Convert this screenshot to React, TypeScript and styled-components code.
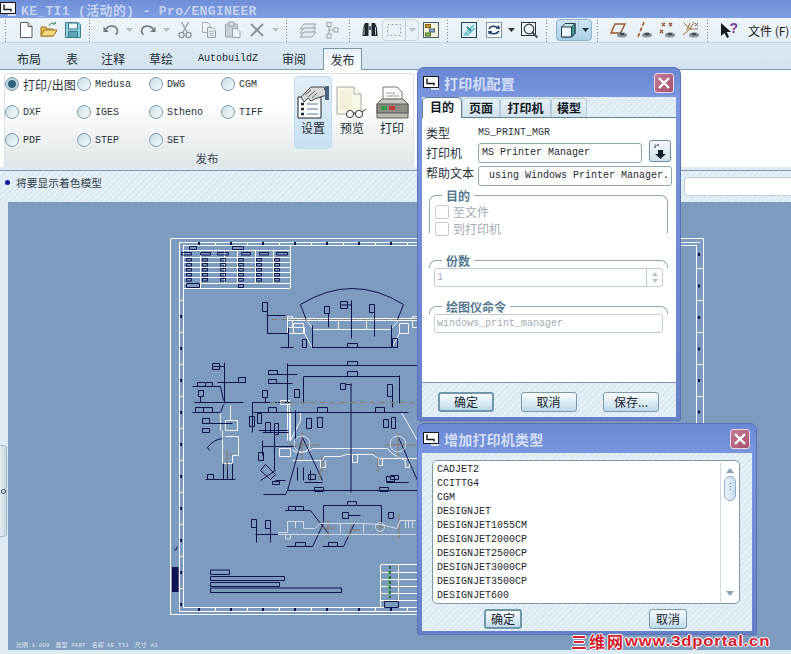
import React from "react";
import styled, { createGlobalStyle } from "styled-components";

const mono = `"Liberation Mono", "Noto Sans CJK SC", monospace`;
const cjk = `"Noto Sans CJK SC", "Liberation Sans", sans-serif`;
const hatch = `repeating-linear-gradient(135deg, #dce9f3 0 2px, #e6f0f7 2px 4px)`;

const GlobalStyle = createGlobalStyle`
  html, body { margin: 0; padding: 0; background: #dfeaf3; }
  body { font-family: ${cjk}; color: #1c2630; }
  fieldset { margin: 0; min-width: 0; }
`;

/* ---------- toolbar icons ---------- */

const Svg = ({ w = 18, h = 18, children }: { w?: number; h?: number; children: React.ReactNode }) => (
  <svg width={w} height={h} viewBox={`0 0 ${w} ${h}`} fill="none">
    {children}
  </svg>
);

const NewIcon = () => (
  <Svg>
    <path d="M3.5 1.5H11L15 5.5V16.5H3.5Z" fill="#fff" stroke="#5b5b5b" />
    <path d="M11 1.5V5.5H15" fill="#e4e4e4" stroke="#5b5b5b" />
  </Svg>
);
const OpenIcon = () => (
  <Svg>
    <path d="M1 6H6L7.5 8H13V15H1Z" fill="#e8b84c" stroke="#9a7420" />
    <path d="M1 15L4 9H17L13.5 15Z" fill="#f7d97c" stroke="#9a7420" />
    <path d="M9 5C10 2 13 1.5 15 3M15 3L15.5 0.8M15 3L12.8 3" stroke="#3f7d4a" />
  </Svg>
);
const SaveIcon = () => (
  <Svg>
    <path d="M1.5 1.5H14L16.5 4V16.5H1.5Z" fill="#8fd1dc" stroke="#3d7e8c" />
    <rect x="4.5" y="2" width="9" height="6" fill="#eef8fa" stroke="#3d7e8c" />
    <rect x="4.5" y="10.5" width="9" height="6" fill="#5aa6b8" stroke="#3d7e8c" />
  </Svg>
);
const UndoIcon = () => (
  <Svg>
    <path d="M4 8C7 4 13 4 15 8C16 10.5 15 12.5 13.5 13.5" stroke="#707a84" strokeWidth="1.6" />
    <path d="M1.5 5.5L7 11L1.5 11Z" fill="#707a84" />
  </Svg>
);
const RedoIcon = () => (
  <Svg>
    <path d="M14 8C11 4 5 4 3 8C2 10.5 3 12.5 4.5 13.5" stroke="#707a84" strokeWidth="1.6" />
    <path d="M16.5 5.5L11 11L16.5 11Z" fill="#707a84" />
  </Svg>
);
const CutIcon = () => (
  <Svg>
    <path d="M5.5 1L11 11M12.5 1L7 11" stroke="#9aa5af" strokeWidth="1.5" />
    <circle cx="5.5" cy="14" r="2.6" stroke="#87929c" strokeWidth="1.3" />
    <circle cx="12.5" cy="14" r="2.6" stroke="#87929c" strokeWidth="1.3" />
  </Svg>
);
const CopyIcon = () => (
  <Svg>
    <path d="M2.5 1.5H8L10 3.5V11.5H2.5Z" fill="#eef2f5" stroke="#a4aeb6" />
    <path d="M7.5 6.5H12.5L15.5 9.5V16.5H7.5Z" fill="#e3e9ee" stroke="#98a2ab" />
    <path d="M9.5 10.5H13.5M9.5 12.5H13.5M9.5 14.5H13.5" stroke="#b3bcc4" />
  </Svg>
);
const PasteIcon = () => (
  <Svg>
    <rect x="1.5" y="3" width="12" height="13" rx="1" fill="#c9d0d6" stroke="#98a2ab" />
    <rect x="5" y="1" width="5" height="4" fill="#dfe4e8" stroke="#98a2ab" />
    <path d="M8.5 7.5H13L16 10.5V16.5H8.5Z" fill="#f0f3f5" stroke="#98a2ab" />
  </Svg>
);
const DeleteIcon = () => (
  <Svg>
    <path d="M3 3L15 15M15 3L3 15" stroke="#8b96a0" strokeWidth="2" />
  </Svg>
);
const LayersIcon = () => (
  <Svg>
    <path d="M5 3H17L13 8H1Z" fill="#e4ebf0" stroke="#98a2ab" />
    <path d="M5 7H17L13 12H1Z" fill="#e4ebf0" stroke="#98a2ab" />
    <path d="M5 11H17L13 16H1Z" fill="#e4ebf0" stroke="#98a2ab" />
  </Svg>
);
const TreeIcon = () => (
  <Svg>
    <path d="M5 4V15M5 9H10" stroke="#98a2ab" />
    <rect x="3" y="1.5" width="4" height="4" fill="#f2f5f7" stroke="#98a2ab" />
    <rect x="10" y="7" width="4" height="4" fill="#f2f5f7" stroke="#98a2ab" />
    <rect x="3" y="13" width="4" height="4" fill="#f2f5f7" stroke="#98a2ab" />
  </Svg>
);
const BinocularIcon = () => (
  <Svg>
    <path d="M2 7L4 2H7.5V15H1.5Z" fill="#20242a" />
    <path d="M16 7L14 2H10.5V15H16.5Z" fill="#20242a" />
    <rect x="7.5" y="5" width="3" height="4" fill="#5c6a78" />
    <path d="M3 6V14M14.5 6V14" stroke="#b7c6d4" />
  </Svg>
);
const TreeColorIcon = () => (
  <Svg w={16} h={16}>
    <rect x="0.5" y="0.5" width="15" height="15" fill="#f6f1d8" stroke="#41606f" />
    <rect x="2.5" y="2.5" width="5" height="3" fill="#d99a2b" stroke="#7b5a16" />
    <rect x="6.5" y="7" width="5" height="3" fill="#8fb5d6" stroke="#38617f" />
    <rect x="2.5" y="11" width="5" height="3" fill="#89b94c" stroke="#4f7020" />
  </Svg>
);
const RepaintIcon = () => (
  <Svg w={16} h={16}>
    <rect x="0.5" y="0.5" width="15" height="15" fill="#e0f1f6" stroke="#23404f" />
    <path d="M3 13L13 3M5 14L14 6" stroke="#79c8cf" strokeWidth="2" />
    <path d="M6 5L10 9" stroke="#2f8aa0" strokeWidth="2" />
  </Svg>
);
const RefitIcon = () => (
  <Svg w={16} h={16}>
    <rect x="0.5" y="0.5" width="15" height="15" fill="#fff" stroke="#7c95a8" />
    <path d="M3 7C4 4 9 3 12 6M13 9C11 12 6 13 4 10" stroke="#18406c" strokeWidth="1.6" />
    <path d="M10 7L14 7L13 3ZM6 9L2 9L3 13Z" fill="#18406c" />
  </Svg>
);
const ZoomIcon = () => (
  <Svg>
    <rect x="0.5" y="1.5" width="14" height="13" fill="#fff" stroke="#28333c" />
    <circle cx="8" cy="8" r="4.8" fill="#eef6fa" stroke="#28333c" strokeWidth="1.2" />
    <path d="M11.5 11.5L16.5 16.5" stroke="#46525d" strokeWidth="2.2" />
  </Svg>
);
const CubeIcon = () => (
  <Svg w={16} h={16}>
    <path d="M1.5 5L5 1.5H15V11.5L11.5 15H1.5Z" fill="#bfe6e6" stroke="#2a3a45" />
    <path d="M11.5 5L15 1.5V11.5L11.5 15Z" fill="#3c9c9c" stroke="#2a3a45" />
    <path d="M1.5 5H11.5V15H1.5Z" fill="#eefafa" stroke="#2a3a45" />
  </Svg>
);
const Eye = () => (
  <>
    <ellipse cx="12" cy="14" rx="5" ry="2.5" fill="#8a9198" />
    <ellipse cx="12" cy="13" rx="2.5" ry="1.3" fill="#3f474e" />
  </>
);
const PlaneIcon = () => (
  <Svg>
    <path d="M5 3H15L10.5 12H1Z" stroke="#9b5a2a" strokeWidth="1.5" />
    <Eye />
  </Svg>
);
const AxisIcon = () => (
  <Svg>
    <path d="M9 1L3 16" stroke="#a3561f" strokeWidth="1.6" strokeDasharray="4 2" />
    <Eye />
  </Svg>
);
const PointIcon = () => (
  <Svg>
    <path d="M4 2L7 5M7 2L4 5M11 2L14 5M14 2L11 5M2 9L5 12M5 9L2 12" stroke="#8c4a1e" strokeWidth="1.2" />
    <Eye />
  </Svg>
);
const CsysIcon = () => (
  <Svg>
    <path d="M2 2L8 8M8 2L5 9M1 14L8 8M8 8H16M12 1L8 8" stroke="#a5702c" />
    <path d="M13 2L16 5M16 2L13 5" stroke="#55606a" />
    <Eye />
  </Svg>
);
const HelpIcon = () => (
  <Svg>
    <path d="M1 2L1 15L4.5 12L7 17L9 16L6.8 11H11Z" fill="#15191e" />
    <text x="9.5" y="12" fontSize="14" fontWeight="700" fontFamily="Liberation Sans, sans-serif" fill="#7d3b9e">?</text>
  </Svg>
);
const SelectBoxIcon = () => (
  <Svg w={16} h={14}>
    <rect x="1.5" y="1.5" width="13" height="11" stroke="#98a2ab" strokeDasharray="2 2" />
  </Svg>
);
const Caret = () => (
  <svg width="7" height="4" viewBox="0 0 7 4">
    <path d="M0 0H7L3.5 4Z" fill="#b6bfc7" />
  </svg>
);
const DarkCaret = () => (
  <svg width="7" height="4" viewBox="0 0 7 4">
    <path d="M0 0H7L3.5 4Z" fill="#26313a" />
  </svg>
);

/* ---------- ribbon pictures ---------- */

const SetupPicture = () => (
  <svg width="33" height="34" viewBox="0 0 33 34">
    <path d="M1 11H24V32H1Z" fill="#fff" stroke="#222" />
    <path d="M4 18H7M4 23H7M4 28H7" stroke="#1c2630" strokeWidth="2.4" />
    <path d="M10 18H21M10 23H21M10 28H21" stroke="#5179a6" />
    <path d="M4 11L14 1H27L30 9L20 12L14 15L11 12L7 16Z" fill="#d8d8d8" stroke="#444" />
    <path d="M8 9L14 4M11 11L18 5M15 12L20 7" stroke="#666" />
    <rect x="28" y="0" width="4" height="14" fill="#48647e" />
  </svg>
);
const PreviewPicture = () => (
  <svg width="33" height="34" viewBox="0 0 33 34">
    <path d="M1 1H18L25 8V28H1Z" fill="#f8f7e8" stroke="#a8a8a2" />
    <path d="M18 1V8H25" fill="#fff" stroke="#a8a8a2" />
    <path d="M4 4H16V25H4Z" fill="#f3f1d9" />
    <circle cx="14" cy="28" r="3.6" fill="#fff" stroke="#333" />
    <circle cx="23" cy="28" r="3.6" fill="#fff" stroke="#333" />
    <path d="M17.5 27H19.5M26 26L30 23" stroke="#333" />
  </svg>
);
const PrintPicture = () => (
  <svg width="33" height="34" viewBox="0 0 33 34">
    <path d="M7 1H21L26 6V17H7Z" fill="#fff" stroke="#777" />
    <path d="M10 7H19M10 10H23M10 13H23" stroke="#9a9a9a" />
    <path d="M1 18L6 13H27L32 18V27H1Z" fill="#c8c8c0" stroke="#67675f" />
    <rect x="1" y="18" width="31" height="9" fill="#8d8d85" stroke="#5a5a53" />
    <rect x="5" y="20" width="6" height="4" fill="#2e9a4a" />
    <rect x="13" y="20" width="6" height="4" fill="#c33a3a" />
    <path d="M1 27H32V32H1Z" fill="#b8b8b0" stroke="#67675f" />
  </svg>
);
const ProeGlyph = () => (
  <svg width="16" height="14" viewBox="0 0 16 14">
    <rect x="0.5" y="0.5" width="15" height="11" fill="#fff" stroke="#14181e" />
    <path d="M4 2.5V7.5H11V9.5" stroke="#14181e" strokeWidth="1.4" fill="none" />
    <path d="M8 12H16V14H8Z" fill="#d7deee" />
  </svg>
);
const CloseGlyph = () => (
  <svg width="12" height="12" viewBox="0 0 12 12">
    <path d="M1 1L11 11M11 1L1 11" stroke="#fff" strokeWidth="2.4" />
  </svg>
);
const PickIcon = () => (
  <svg width="15" height="15" viewBox="0 0 15 15">
    <path d="M5 6H10V10H13L7.5 15L2 10H5Z" fill="#14202a" />
    <path d="M1 3H3M5 0V2M2 0.5L3.5 2" stroke="#14202a" />
  </svg>
);

/* ---------- drawing ---------- */

const box = (a: number, b: number, c: number, d: number) => `M${a} ${b}H${c}V${d}H${a}Z`;
const range = (from: number, step: number, n: number) => Array.from({ length: n }, (_, i) => from + i * step);

const tableLines = () => {
  const rows = [250, 257, 262, 267, 272, 277, 283]
    .map((y) => `M183 ${y}H290`)
    .join("");
  const cols = [200, 224, 237, 255, 273]
    .map((x) => `M${x} 250V283`)
    .join("");
  return rows + cols + "M183 288H290M290 245V288M200 283V288";
};

const tableBoxes = () => {
  const out: string[] = [box(189, 246, 196, 249), box(232, 246, 243, 249)];
  [181, 200, 217, 241, 259, 276].forEach((x, i) => {
    const w = [10, 10, 11, 9, 9, 11][i];
    out.push(box(x, 252, x + w, 254.5));
  });
  [186, 202, 220, 238, 256, 274].forEach((x) => {
    [258, 263, 268, 273, 278].forEach((y) => out.push(box(x, y, x + 5, y + 2.6)));
  });
  out.push(box(186, 283, 199, 287), box(238, 284, 243, 287));
  return out.join("");
};

const navyLines = [
  // top view
  "M300 304Q352 272 403 304M300 304L306 320M403 304L397 319",
  "M312 325V347H391V325M351 300V338M328 313V327M374 305V336M340 304.5H351",
  "M266 315H285M267 311V333H288M288 327V347M280 347H293",
  box(347, 343, 357, 347), box(340, 301, 347, 308), box(324, 306, 329, 313), box(369, 304, 374, 312),
  box(262, 302, 267, 311), box(302, 339, 306, 347), box(392, 338, 397, 347),
  // front view
  "M287 365H417M303 376H399M287 363V403M303 376V403M399 375V403M345 384H351M350.5 383V492M392 385V407",
  box(347, 361, 357, 365), box(347, 371, 357, 376), box(340, 383, 345, 389), box(387, 384, 392, 396),
  "M212 366H224M224 362V403M217 382H245M192 386H220L223 400M194 402H243M192 412H220L223 404M202 423H232M200 396V402",
  box(212, 363, 219, 369), box(238, 377, 245, 382), box(197, 382, 205, 386), box(205, 382, 212, 386),
  box(198, 390, 203, 396), box(195, 407, 203, 412), box(203, 407, 212, 412), box(202, 418, 209, 423), box(202, 428, 209, 432),
  "M265 397V402M252 402H293M252 402V432M268 374H297M268 383H292M253 412H408M295 410V440M258 430H288",
  box(262, 390, 267, 397), box(249, 416, 254, 426), box(257, 413, 261, 423), box(268, 370, 277, 374), box(268, 379, 276, 383),
  box(294, 389, 299, 397), box(268, 407, 276, 412), box(317, 407, 327, 412), box(375, 407, 384, 412),
  box(265, 422, 270, 432), box(274, 423, 278, 434), box(306, 418, 311, 428), box(317, 417, 322, 427), box(383, 419, 388, 427), box(391, 417, 395, 428),
  box(258, 452, 263, 460), box(207, 474, 213, 479),
  // lower part of the front view
  "M262 432H288M262 446H295M262 440V455M274 432V470M302 437L287 490M302 437L322 480M398 437L417 480",
  "M287 490H417M263 494H285L287 490M275 480H285M297 467V480M303 467V480M310 470V480M304 482H322M386 482H408",
  box(314, 487, 323, 491), box(379, 487, 388, 491), box(308, 474, 315, 479), box(386, 476, 394, 481), box(272, 481, 279, 484), box(390, 475, 398, 479),
  "M265 464L275 474L270 479L260 470ZM260 480L275 470",
  "M205 479H235M223 463V479M227 463V479M232 463V479M207 447Q213 439 222 438M207 447L209 450",
  // side view
  "M323 522V505H381V523M285 510H310L328 533M286 546H312L323 523M322 546H343L354 523M256 527V542M270 528V542M255 534H278M348 515H360",
  box(347, 501, 356, 505), box(288, 506, 295, 510), box(295, 506, 303, 510), box(295, 542, 305, 546), box(328, 542, 337, 546),
  box(342, 512, 348, 518), box(251, 519, 256, 527), box(265, 520, 270, 528), box(388, 512, 393, 518),
  // notes
  box(210, 569.5, 229, 574), box(210, 576, 284, 580), box(210, 582, 279, 586), box(210, 587.5, 341, 592), box(384, 601, 398, 607),
].join("");

const whiteLines = [
  box(287, 316, 292, 327), box(287, 327, 304, 333), box(293, 323, 303, 333), box(399, 323, 408, 333), box(412, 316, 417, 327),
  "M287 318H417M287 320H417M307 321L313 329H390L397 321M338 321V329M366 321V329M304 333L311 346M399 333L392 346",
  // front view body
  "M280 400H289V404H280ZM287 400V440M289 404V440M225 420H237V430H225ZM220 412V430M230 405V420",
  "M222 430V463H232V455H238V436H225",
  "M292 450Q300 455 312 448H387Q392 455 405 460M292 460H322L324 456H340L346 454H372L378 458H417",
  "M320 460V467H325V460M352 454V462H357V454M378 458V465H382V458M405 460V467H409V460",
  "M279 448H290V456H279ZM290 412V440L300 420V412M401 412L417 440",
].join("");

const DrawingSvg = () => (
  <DrawingFrame viewBox="8 202 783 448">
    <g stroke="#fff" fill="none" strokeWidth="1" shapeRendering="crispEdges">
      <rect x="170.5" y="238.5" width="533" height="375.5" />
      <path d="M179.5 611.5V242.5H700M183.5 607.5V245.5H696.5V607.5H183.5M179.5 611.5H703" />
      <path d={tableLines()} />
      {range(215, 32, 15).map((x) => (
        <path key={x} d={`M${x}.5 242V245M${x}.5 607V611`} />
      ))}
      {range(268, 32, 11).map((y) => (
        <path key={y} d={`M696 ${y}.5H703`} />
      ))}
      {range(300, 32, 10).map((y) => (
        <path key={y} d={`M179 ${y}.5H183`} />
      ))}
      <path d="M380.5 564.5H417M380.5 564.5V607M398.5 564.5V607M380 572H417M380 579H417M380 586H417M380 593H417M380 600H417" />
    </g>
    <g fill="#10114f">
      {range(198, 32, 15).map((x) => (
        <React.Fragment key={x}>
          <rect x={x} y="242" width="2" height="3" />
          <rect x={x} y="608" width="2" height="3" />
        </React.Fragment>
      ))}
      {range(315, 32, 10).map((y) => (
        <rect key={y} x="180" y={y} width="2" height="3" />
      ))}
      {range(253, 31.5, 12).map((y) => (
        <rect key={y} x="698" y={y} width="2" height="3" />
      ))}
      <rect x="172" y="567" width="6.5" height="25" />
      <path d="M173 546L175 550L178 545L177 549L175 551Z" />
    </g>
    <g transform="translate(0.5 0.5)">
      <path d={tableBoxes()} stroke="#10114f" fill="none" strokeWidth="1" />
      <path d={whiteLines} stroke="#f4f7fb" fill="none" strokeWidth="1" />
      <path d={navyLines} stroke="#10114f" fill="none" strokeWidth="1" />
    </g>
    <g stroke="#8a7a68" strokeWidth="1" fill="none">
      <path d="M270 402.5H417" strokeDasharray="5 2 1 2" />
      <path d="M272 319.5H417" strokeDasharray="5 2 1 2" />
      <path d="M289 445H320M302 432V460M320 470V480M322 456V472M378 458V472M385 445H416M398 434V458" />
      <path d="M320 528H335M328 520V538M350 530H360M352 525L348 537M376 527H388M380 520V535M399 514V538" />
      <path d="M227 450V470M229 455H232" />
    </g>
    <g stroke="#e6edf5" fill="none" strokeWidth="0.8">
      <circle cx="302" cy="444" r="8" />
      <circle cx="398" cy="444" r="8" />
      <path d="M278.5 532.5H287.5V521.5H303.5V528.5H315L320 523.5H363L380 524.5L397 528.5L400 520.5H416" />
      <path d="M278 534.5H416M295.5 521V528M340.5 523V533M363.5 523V533M405.5 520V528M408.5 520V528M412.5 520V528" />
      <circle cx="380" cy="527" r="4.5" />
      <path d="M285.5 534V539H290.5V534" />
    </g>
    <path d="M390 566V598" stroke="#0d5a1a" strokeWidth="1.5" strokeDasharray="3 2" />
    <path d="M388.5 570V596" stroke="#46c04a" strokeWidth="1" opacity="0.7" />
  </DrawingFrame>
);

/* ---------- data ---------- */

type Tool =
  | { kind: "space"; w: number }
  | { kind: "grip" }
  | { kind: "icon"; w: number; icon: React.ReactNode };

const sp = (w: number): Tool => ({ kind: "space", w });
const grip: Tool = { kind: "grip" };
const ic = (w: number, icon: React.ReactNode): Tool => ({ kind: "icon", w, icon });

const tools: Tool[] = [
  sp(4), grip, sp(6),
  ic(23, <NewIcon />), ic(24, <OpenIcon />), ic(23, <SaveIcon />),
  sp(4), grip, sp(6),
  ic(25, <UndoIcon />), ic(12, <Caret />), ic(26, <RedoIcon />), ic(11, <Caret />),
  ic(26, <CutIcon />), ic(22, <CopyIcon />), ic(25, <PasteIcon />), ic(24, <DeleteIcon />), ic(12, <Caret />),
  sp(4), grip, sp(6),
  ic(26, <LayersIcon />), ic(24, <TreeIcon />),
  sp(3), grip, sp(6),
  ic(24, <BinocularIcon />),
];

const tools2: Tool[] = [
  ic(23, <TreeColorIcon />),
  sp(4), grip, sp(6),
  ic(26, <RepaintIcon />), ic(23, <RefitIcon />), ic(12, <DarkCaret />), ic(26, <ZoomIcon />),
  sp(2), grip, sp(7),
];

const tools3: Tool[] = [
  sp(4), grip, sp(6),
  ic(26, <PlaneIcon />), ic(24, <AxisIcon />), ic(22, <PointIcon />), ic(26, <CsysIcon />),
  sp(2), grip, sp(6),
  ic(26, <HelpIcon />),
];

const tabs = ["布局", "表", "注释", "草绘", "AutobuildZ", "审阅"];
const tabWidths = [49, 35, 48, 49, 84, 41];

const publishTargets = ["打印/出图", "Medusa", "DWG", "CGM", "DXF", "IGES", "Stheno", "TIFF", "PDF", "STEP", "SET"];

const printerTypes = [
  "CADJET2", "CCITTG4", "CGM", "DESIGNJET", "DESIGNJET1055CM", "DESIGNJET2000CP",
  "DESIGNJET2500CP", "DESIGNJET3000CP", "DESIGNJET3500CP", "DESIGNJET600",
];

const renderTools = (list: Tool[]) =>
  list.map((t, i) => {
    if (t.kind === "grip") return <Grip key={i} />;
    if (t.kind === "space") return <ToolSlot key={i} $w={t.w} />;
    return (
      <ToolSlot key={i} $w={t.w}>
        {t.icon}
      </ToolSlot>
    );
  });

/* ---------- page ---------- */

export default function App() {
  return (
    <Page>
      <GlobalStyle />
      <TitleBar>
        <ProeGlyph />
        <TitleText>KE_TI1 (活动的) - Pro/ENGINEER</TitleText>
      </TitleBar>

      <Toolbar>
        {renderTools(tools)}
        <SplitButton $w={37} $muted>
          <SplitMain>
            <SelectBoxIcon />
          </SplitMain>
          <SplitArrow>
            <Caret />
          </SplitArrow>
        </SplitButton>
        {renderTools(tools2)}
        <SplitButton $w={36}>
          <SplitMain>
            <CubeIcon />
          </SplitMain>
          <SplitArrow>
            <DarkCaret />
          </SplitArrow>
        </SplitButton>
        {renderTools(tools3)}
        <FileMenu>文件 (F)</FileMenu>
      </Toolbar>

      <TabBar>
        {tabs.map((t, i) => (
          <Tab key={t} $w={tabWidths[i]} $latin={t === "AutobuildZ"}>
            {t}
          </Tab>
        ))}
        <ActiveTab>发布</ActiveTab>
      </TabBar>

      <Ribbon>
        <RibbonGroup>
          <TargetColumn>
            <TargetGrid>
              {publishTargets.map((t, i) => (
                <Target key={t}>
                  <Radio $on={i === 0} />
                  <TargetLabel $cjk={i === 0}>{t}</TargetLabel>
                </Target>
              ))}
            </TargetGrid>
            <GroupCaption>发布</GroupCaption>
          </TargetColumn>
          <RibbonButton $active>
            <SetupPicture />
            设置
          </RibbonButton>
          <RibbonButton>
            <PreviewPicture />
            预览
          </RibbonButton>
          <RibbonButton>
            <PrintPicture />
            打印
          </RibbonButton>
        </RibbonGroup>
      </Ribbon>

      <StatusBar>
        <StatusDot />
        <StatusText>将要显示着色模型</StatusText>
        <CommandInput />
      </StatusBar>

      <Workspace>
        <SideStrip>
          <SideHandle>
            <HandleDot />
          </SideHandle>
        </SideStrip>
        <Canvas>
          <DrawingSvg />
          <ModelInfo>
            <span>比例:1.000</span>
            <span>类型 PART</span>
            <span>名称:KE_TI1</span>
            <span>尺寸 A3</span>
          </ModelInfo>
        </Canvas>
      </Workspace>
      <BottomStrip />

      <Dialog $x={417} $y={67} $w={264} $h={354}>
        <DialogTitle>
          <ProeGlyph />
          <DialogName>打印机配置</DialogName>
          <CloseButton>
            <CloseGlyph />
          </CloseButton>
        </DialogTitle>
        <DialogClient>
          <DialogTabs>
            <DialogTab $on $w={40}>目的</DialogTab>
            <DialogTab $w={38}>页面</DialogTab>
            <DialogTab $w={51}>打印机</DialogTab>
            <DialogTab $w={36}>模型</DialogTab>
          </DialogTabs>
          <DialogBody>
            <FormRow $h={18}>
              <FormLabel>类型</FormLabel>
              <PlainValue>MS_PRINT_MGR</PlainValue>
            </FormRow>
            <FormRow $h={23}>
              <FormLabel>打印机</FormLabel>
              <TextBox $w={164}>MS Printer Manager</TextBox>
              <PickButton>
                <PickIcon />
              </PickButton>
            </FormRow>
            <FormRow $h={24}>
              <FormLabel $up={8}>帮助文本</FormLabel>
              <TextBox $w={194} $indent={10}>using Windows Printer Manager.</TextBox>
            </FormRow>
            <Group $h={44} $top={0}>
              <GroupLegend>目的</GroupLegend>
              <CheckRow>
                <CheckBox />
                <CheckLabel>至文件</CheckLabel>
              </CheckRow>
              <CheckRow>
                <CheckBox />
                <CheckLabel>到打印机</CheckLabel>
              </CheckRow>
            </Group>
            <Group $h={6} $top={20}>
              <GroupLegend>份数</GroupLegend>
              <DisabledBox>
                <DisabledText>1</DisabledText>
                <Spinner>
                  <SpinUp />
                  <SpinDown />
                </Spinner>
              </DisabledBox>
            </Group>
            <Group $h={6} $top={39}>
              <GroupLegend>绘图仪命令</GroupLegend>
              <DisabledBox>
                <DisabledText>windows_print_manager</DisabledText>
              </DisabledBox>
            </Group>
          </DialogBody>
          <DialogFooter>
            <PushButton $w={56} $primary>确定</PushButton>
            <PushButton $w={56}>取消</PushButton>
            <PushButton $w={56}>保存...</PushButton>
          </DialogFooter>
        </DialogClient>
      </Dialog>

      <Dialog $x={417} $y={423} $w={340} $h={212}>
        <DialogTitle>
          <ProeGlyph />
          <DialogName>增加打印机类型</DialogName>
          <CloseButton>
            <CloseGlyph />
          </CloseButton>
        </DialogTitle>
        <TypeClient>
          <ListBox>
            <ListItems>
              {printerTypes.map((p) => (
                <ListItem key={p}>{p}</ListItem>
              ))}
            </ListItems>
            <ScrollTrack>
              <ArrowUp />
              <ScrollThumb>⋮</ScrollThumb>
              <ArrowDown />
            </ScrollTrack>
          </ListBox>
          <TypeFooter>
            <PushButton $w={38} $primary>确定</PushButton>
            <PushButton $w={38}>取消</PushButton>
          </TypeFooter>
        </TypeClient>
      </Dialog>

      <Watermark>
        三维网<WatermarkUrl>www.3dportal.cn</WatermarkUrl>
      </Watermark>
    </Page>
  );
}

/* ---------- styles ---------- */

const Page = styled.div`
  position: relative;
  width: 791px;
  height: 654px;
  overflow: hidden;
  display: flex;
  flex-direction: column;
`;

const TitleBar = styled.div`
  height: 18px;
  display: flex;
  align-items: center;
  gap: 5px;
  background: linear-gradient(180deg, #6e8fd8, #7f9de2);
  flex-shrink: 0;
`;

const TitleText = styled.span`
  font: 700 13px ${mono};
  letter-spacing: 0.35px;
  color: #c4d2ee;
  white-space: pre;
`;

const Toolbar = styled.div`
  height: 25px;
  display: flex;
  align-items: center;
  background: linear-gradient(180deg, #eef5f9, #e4eef5);
  border-bottom: 1px solid #c4d3de;
  box-sizing: border-box;
  flex-shrink: 0;
`;

const ToolSlot = styled.div<{ $w: number }>`
  width: ${(p) => p.$w}px;
  flex-shrink: 0;
  display: flex;
  align-items: center;
  justify-content: center;
`;

const Grip = styled.div`
  width: 3px;
  height: 23px;
  margin-right: 1px;
  flex-shrink: 0;
  background-image: radial-gradient(#6d7f8c 0.7px, transparent 0.8px);
  background-size: 3px 3px;
`;

const SplitButton = styled.div<{ $w: number; $muted?: boolean }>`
  width: ${(p) => p.$w}px;
  height: 22px;
  box-sizing: border-box;
  flex-shrink: 0;
  display: flex;
  border: 1px solid ${(p) => (p.$muted ? "#ccd6dd" : "#8fb2c9")};
  border-radius: 4px;
  background: ${(p) => (p.$muted ? "#eaf1f6" : "linear-gradient(180deg, #cfe6f4, #a9d0e8)")};
`;

const SplitMain = styled.div`
  flex: 1;
  display: flex;
  align-items: center;
  justify-content: center;
`;

const SplitArrow = styled.div`
  width: 12px;
  display: flex;
  align-items: center;
  justify-content: center;
  border-left: 1px solid #b4c8d6;
`;

const FileMenu = styled.span`
  margin-left: 6px;
  font-size: 12px;
  white-space: nowrap;
  color: #1a1a1a;
`;

const TabBar = styled.div`
  height: 27px;
  padding: 5px 0 0 0;
  box-sizing: border-box;
  display: flex;
  align-items: stretch;
  background: linear-gradient(180deg, #dce9f2, #d4e3ee);
  border-bottom: 1px solid #7d97a8;
  flex-shrink: 0;
`;

const Tab = styled.div<{ $w: number; $latin?: boolean }>`
  width: ${(p) => p.$w}px;
  box-sizing: border-box;
  padding-left: ${(p) => (p.$latin ? 0 : 17)}px;
  margin-left: ${(p) => (p.$latin ? 17 : 0)}px;
  margin-right: ${(p) => (p.$latin ? -17 : 0)}px;
  font: ${(p) => (p.$latin ? `10px ${mono}` : `12px ${cjk}`)};
  line-height: 21px;
  white-space: nowrap;
  color: #222c34;
`;

const ActiveTab = styled.div`
  margin-left: 17px;
  width: 39px;
  height: 23px;
  box-sizing: border-box;
  text-align: center;
  font-size: 12px;
  line-height: 21px;
  border: 1px solid #7d97a8;
  border-bottom: none;
  background: linear-gradient(180deg, #e6f0f7, #ffffff);
  color: #222c34;
`;

const Ribbon = styled.div`
  height: 97px;
  padding: 3px 0 0 4px;
  box-sizing: border-box;
  background: #fff;
  flex-shrink: 0;
`;

const RibbonGroup = styled.div`
  width: 410px;
  height: 94px;
  box-sizing: border-box;
  display: flex;
  border: 1px solid #d8e1e6;
  border-bottom: none;
  border-radius: 4px 4px 0 0;
  background: linear-gradient(180deg, #ffffff 30%, #e0e6e8 100%);
`;

const TargetColumn = styled.div`
  width: 285px;
  display: flex;
  flex-direction: column;
`;

const TargetGrid = styled.div`
  display: grid;
  grid-template-columns: repeat(4, 72px);
  grid-auto-rows: 28px;
  height: 84px;
  margin-top: -4px;
`;

const Target = styled.label`
  display: flex;
  align-items: center;
  gap: 5px;
  white-space: nowrap;
`;

const Radio = styled.span<{ $on?: boolean }>`
  width: 12px;
  height: 12px;
  flex-shrink: 0;
  border-radius: 50%;
  border: 1px solid #7e98a8;
  background: ${(p) =>
    p.$on
      ? "radial-gradient(circle, #31607c 0 3.5px, #bcd5e3 4.5px)"
      : "linear-gradient(135deg, #c9dde9, #f8fbfd)"};
`;

const TargetLabel = styled.span<{ $cjk?: boolean }>`
  font: ${(p) => (p.$cjk ? `12px ${cjk}` : `10px ${mono}`)};
  color: #2a333a;
  margin-left: -1px;
`;

const GroupCaption = styled.div`
  text-align: center;
  margin-left: 155px;
  margin-top: -4px;
  width: 94px;
  font-size: 11.5px;
  line-height: 16px;
  color: #3c464d;
`;

const RibbonButton = styled.div<{ $active?: boolean }>`
  width: ${(p) => (p.$active ? 38 : 40)}px;
  height: 73px;
  margin-top: 2px;
  margin-left: ${(p) => (p.$active ? 4 : 0)}px;
  box-sizing: border-box;
  padding-top: 9px;
  display: flex;
  flex-direction: column;
  align-items: center;
  font-size: 12px;
  line-height: 14px;
  color: #1e2a33;
  border-radius: 4px;
  border: ${(p) => (p.$active ? "1px solid #c2dcef" : "1px solid transparent")};
  background: ${(p) => (p.$active ? "linear-gradient(180deg, #e0eef8, #c9e0f2)" : "transparent")};
  svg { margin-bottom: 1px; }
`;

const StatusBar = styled.div`
  height: 32px;
  margin-top: 3px;
  padding: 0 0 8px 5px;
  box-sizing: border-box;
  display: flex;
  align-items: center;
  background: ${hatch};
  border-top: 1px solid #7d97a8;
  flex-shrink: 0;
`;

const StatusDot = styled.span`
  width: 5px;
  height: 5px;
  border-radius: 50%;
  background: #10189a;
`;

const StatusText = styled.span`
  margin-left: 6px;
  font-size: 10.75px;
  color: #34404a;
`;

const CommandInput = styled.div`
  margin-left: auto;
  margin-top: 8px;
  width: 107px;
  height: 19px;
  box-sizing: border-box;
  background: #fff;
  border: 1px solid #c2ced6;
  border-right: none;
  border-radius: 3px 0 0 3px;
`;

const Workspace = styled.div`
  height: 448px;
  display: flex;
  flex-shrink: 0;
`;

const SideStrip = styled.div`
  width: 8px;
  background: #dfeaf3;
  display: flex;
  align-items: center;
`;

const SideHandle = styled.div`
  width: 7px;
  height: 92px;
  margin-top: 130px;
  border: 1px solid #a8bac6;
  border-left: none;
  border-radius: 0 4px 4px 0;
  box-sizing: border-box;
  background: linear-gradient(90deg, #e4edf3, #c9d6df);
  display: flex;
  align-items: center;
  justify-content: center;
`;

const HandleDot = styled.span`
  width: 3px;
  height: 3px;
  border: 1px solid #3c4a54;
  border-radius: 50%;
`;

const Canvas = styled.div`
  position: relative;
  width: 783px;
  height: 448px;
  background: #7d9abf;
`;

const DrawingFrame = styled.svg`
  display: block;
  width: 783px;
  height: 448px;
`;

const ModelInfo = styled.div`
  position: absolute;
  left: 8px;
  bottom: 0;
  display: flex;
  gap: 6px;
  font: 700 6px/9px ${mono};
  white-space: nowrap;
  color: #c7d4e4;
`;

const BottomStrip = styled.div`
  flex: 1;
  background: #dfeaf3;
`;

const Dialog = styled.div<{ $x: number; $y: number; $w: number; $h: number }>`
  position: absolute;
  left: ${(p) => p.$x}px;
  top: ${(p) => p.$y}px;
  width: ${(p) => p.$w}px;
  height: ${(p) => p.$h}px;
  box-sizing: border-box;
  padding: 0 4px 3px 4px;
  display: flex;
  flex-direction: column;
  background: linear-gradient(180deg, #6a88d4 0, #7a96de 30px, #6680c8 100%);
  border: 1px solid #5a72ba;
  border-radius: 7px 7px 2px 2px;
`;

const DialogTitle = styled.div`
  height: 29px;
  flex-shrink: 0;
  display: flex;
  align-items: center;
  padding-left: 1px;
`;

const DialogName = styled.span`
  margin-left: 5px;
  font-size: 14px;
  font-weight: 700;
  color: #d3def5;
  letter-spacing: 0.2px;
`;

const CloseButton = styled.div`
  margin-left: auto;
  margin-right: 2px;
  width: 20px;
  height: 20px;
  box-sizing: border-box;
  display: flex;
  align-items: center;
  justify-content: center;
  border: 1px solid #e9d6de;
  border-radius: 3px;
  background: linear-gradient(135deg, #c47c96, #a8506f);
`;

const DialogClient = styled.div`
  flex: 1;
  display: flex;
  flex-direction: column;
  background: ${hatch};
  min-height: 0;
`;

const DialogTabs = styled.div`
  height: 21px;
  flex-shrink: 0;
  display: flex;
  align-items: flex-end;
  border-bottom: 1px solid #5f8298;
  box-sizing: border-box;
`;

const DialogTab = styled.div<{ $on?: boolean; $w: number }>`
  width: ${(p) => p.$w}px;
  height: ${(p) => (p.$on ? 21 : 19)}px;
  box-sizing: border-box;
  text-align: center;
  font-size: 12px;
  font-weight: 700;
  line-height: 18px;
  color: #10181e;
  border: 1px solid ${(p) => (p.$on ? "#5f8298" : "#b6cbd8")};
  border-bottom: none;
  border-radius: ${(p) => (p.$on ? "5px 5px 0 0" : "3px 3px 0 0")};
  background: ${(p) => (p.$on ? "#fff" : "linear-gradient(180deg, #e6f0f6, #d2e2ec)")};
  margin-bottom: ${(p) => (p.$on ? -1 : 0)}px;
  position: relative;
`;

const DialogBody = styled.div`
  flex: 1;
  background: #fff;
  padding: 5px 0 0 4px;
  display: flex;
  flex-direction: column;
  min-height: 0;
`;

const FormRow = styled.div<{ $h: number }>`
  height: ${(p) => p.$h}px;
  flex-shrink: 0;
  display: flex;
  align-items: center;
  font-size: 12px;
  color: #26323b;
`;

const FormLabel = styled.span<{ $up?: number }>`
  width: 52px;
  flex-shrink: 0;
  white-space: nowrap;
  margin-top: ${(p) => -(p.$up ?? 0)}px;
`;

const PlainValue = styled.span`
  font: 10px ${mono};
  color: #2a333a;
`;

const TextBox = styled.div<{ $w: number; $indent?: number }>`
  width: ${(p) => p.$w}px;
  height: 20px;
  box-sizing: border-box;
  padding-left: ${(p) => p.$indent ?? 3}px;
  font: 10px/18px ${mono};
  white-space: nowrap;
  overflow: hidden;
  color: #1f2a32;
  border: 1px solid #8fa9b8;
  border-radius: 3px;
  background: #fff;
`;

const PickButton = styled.div`
  width: 22px;
  height: 22px;
  margin-left: 7px;
  margin-top: -3px;
  box-sizing: border-box;
  display: flex;
  align-items: center;
  justify-content: center;
  border: 1px solid #6f8c9e;
  border-radius: 3px;
  background: linear-gradient(180deg, #f4f9fc, #d0e2ee);
`;

const Group = styled.fieldset<{ $h: number; $top: number }>`
  width: 229px;
  height: ${(p) => p.$h}px;
  box-sizing: content-box;
  margin-top: ${(p) => p.$top}px;
  margin-left: 3px;
  padding: 0 4px;
  border: 1px solid #8fa9b8;
  border-bottom: none;
  border-radius: 7px 7px 0 0;
  flex-shrink: 0;
`;

const GroupLegend = styled.legend`
  margin-left: 8px;
  padding: 0 4px;
  font-size: 12px;
  font-weight: 700;
  line-height: 15px;
  color: #557890;
`;

const CheckRow = styled.div`
  height: 17px;
  display: flex;
  align-items: center;
  gap: 4px;
  margin-left: 1px;
`;

const CheckBox = styled.span`
  width: 12px;
  height: 12px;
  border: 1px solid #c3cdd3;
  border-radius: 2px;
`;

const CheckLabel = styled.span`
  font-size: 12px;
  color: #a3adb4;
`;

const DisabledBox = styled.div`
  height: 19px;
  box-sizing: border-box;
  display: flex;
  align-items: center;
  border: 1px solid #c0cdd5;
  border-radius: 3px;
  padding-left: 2px;
  background: #fff;
`;

const DisabledText = styled.span`
  flex: 1;
  font: 10px ${mono};
  color: #a3adb4;
`;

const Spinner = styled.div`
  width: 15px;
  height: 17px;
  border-left: 1px solid #c0cdd5;
  display: flex;
  flex-direction: column;
  align-items: center;
  justify-content: center;
  gap: 3px;
`;

const SpinUp = styled.span`
  border: 3px solid transparent;
  border-top: none;
  border-bottom: 4px solid #b6c2ca;
`;

const SpinDown = styled.span`
  border: 3px solid transparent;
  border-bottom: none;
  border-top: 4px solid #b6c2ca;
`;

const DialogFooter = styled.div`
  height: 35px;
  flex-shrink: 0;
  display: flex;
  align-items: center;
  justify-content: space-between;
  padding: 4px 17px 0 16px;
  box-sizing: border-box;
  border-top: 1px solid #7b97a8;
`;

const PushButton = styled.div<{ $w: number; $primary?: boolean }>`
  width: ${(p) => p.$w}px;
  height: 20px;
  box-sizing: border-box;
  text-align: center;
  font-size: 12px;
  line-height: ${(p) => (p.$primary ? 16 : 18)}px;
  color: #182229;
  border: ${(p) => (p.$primary ? "2px solid #6f98ad" : "1px solid #7f98a8")};
  border-radius: 3px;
  background: linear-gradient(180deg, #f8fbfd, #d3e6f2 70%, #bcd8ea);
`;

const TypeClient = styled.div`
  flex: 1;
  background: ${hatch};
  padding: 7px 12px 0 10px;
  display: flex;
  flex-direction: column;
  min-height: 0;
`;

const ListBox = styled.div`
  height: 144px;
  flex-shrink: 0;
  box-sizing: border-box;
  display: flex;
  background: #fff;
  border: 1px solid #7f98a8;
  border-radius: 5px;
`;

const ListItems = styled.div`
  flex: 1;
  padding: 2px 0 0 4px;
`;

const ListItem = styled.div`
  font: 10px/14px ${mono};
  color: #1c252c;
`;

const ScrollTrack = styled.div`
  width: 19px;
  margin: 1px 0;
  border-left: 1px solid #ccd9e1;
  display: flex;
  flex-direction: column;
  align-items: center;
  padding: 6px 0;
  box-sizing: border-box;
`;

const ArrowUp = styled.span`
  border: 4px solid transparent;
  border-top: none;
  border-bottom: 5px solid #83a0b0;
`;

const ArrowDown = styled.span`
  margin-top: auto;
  border: 4px solid transparent;
  border-bottom: none;
  border-top: 5px solid #83a0b0;
`;

const ScrollThumb = styled.div`
  width: 12px;
  height: 25px;
  margin-top: 3px;
  box-sizing: border-box;
  font: 9px/22px ${mono};
  text-align: center;
  color: #4f6c80;
  border: 1px solid #8fb0c4;
  border-radius: 6px;
  background: linear-gradient(90deg, #e9f3f9, #c7dfee);
`;

const TypeFooter = styled.div`
  flex: 1;
  display: flex;
  align-items: center;
  padding: 2px 53px 0 52px;
  justify-content: space-between;
`;

const Watermark = styled.div`
  position: absolute;
  left: 571px;
  top: 633px;
  display: flex;
  align-items: center;
  font: 700 16px/16px ${cjk};
  letter-spacing: 2px;
  color: #d5202e;
  white-space: nowrap;
  text-shadow: 1px 0 0 #fff, -1px 0 0 #fff, 0 1px 0 #fff, 0 -1px 0 #fff;
`;

const WatermarkUrl = styled.span`
  display: inline-block;
  font: 700 14px/16px "Liberation Sans", sans-serif;
  letter-spacing: 0.7px;
  transform: scaleX(1.19);
  transform-origin: left center;
`;
